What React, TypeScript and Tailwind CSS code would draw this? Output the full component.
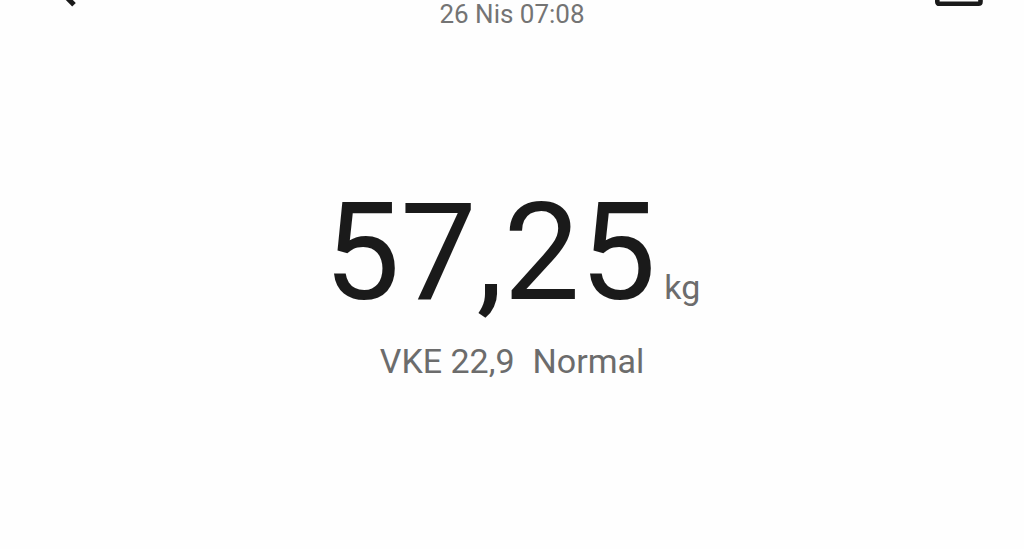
import React from "react";

export default function App() {
  const measurement = {
    date: "26 Nis 07:08",
    weight: "57,25",
    unit: "kg",
    bmi: "VKE 22,9",
    status: "Normal",
  };

  return (
    <div className="min-h-screen bg-[#fefefe] font-[Roboto,sans-serif] text-[#6c6c6c] overflow-hidden">
      {/* ================= HEADER ================= */}
      <header className="flex items-start justify-between px-10">
        <button type="button" aria-label="Geri" className="w-12 text-[#1a1a1a]">
          <svg className="w-12 h-8" viewBox="0 0 48 32" fill="none">
            <path
              d="M19.5 -10L34 4.8"
              stroke="currentColor"
              strokeWidth="5"
            />
          </svg>
        </button>
        <time className="text-[26px] leading-7 text-[#747474]">
          {measurement.date}
        </time>
        <button type="button" aria-label="Sil" className="w-12 text-[#1a1a1a]">
          <svg
            className="w-12 h-8 overflow-visible"
            viewBox="0 0 48 32"
            fill="none"
          >
            <path
              d="M1.3 -4V1.8Q1.3 3.8 3.3 3.8H42.5Q44.5 3.8 44.5 1.8V-4"
              stroke="currentColor"
              strokeWidth="4.6"
            />
          </svg>
        </button>
      </header>

      {/* ================= MEASUREMENT ================= */}
      <main className="flex flex-col items-center gap-2 pt-[141px]">
        <h1 className="flex items-baseline gap-2 font-normal">
          <span className="text-[136px] leading-40 text-[#1a1a1a]">
            {measurement.weight}
          </span>
          <span className="text-[34px] leading-10">{measurement.unit}</span>
        </h1>
        <p className="flex gap-[18px] text-[34px] leading-10">
          <span>{measurement.bmi}</span>
          <span>{measurement.status}</span>
        </p>
      </main>
    </div>
  );
}
